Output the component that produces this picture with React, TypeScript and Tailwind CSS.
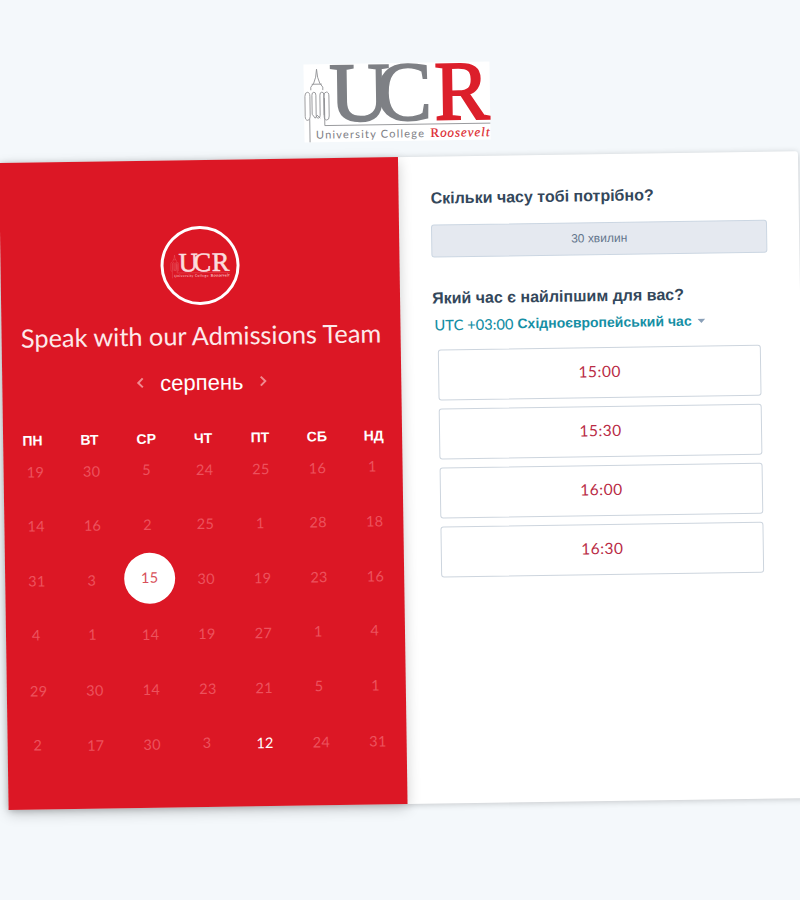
import React from "react";
import clsx from "clsx";

const weekdays = ["ПН", "ВТ", "СР", "ЧТ", "ПТ", "СБ", "НД"];

const weeks: number[][] = [
  [19, 30, 5, 24, 25, 16, 1],
  [14, 16, 2, 25, 1, 28, 18],
  [31, 3, 15, 30, 19, 23, 16],
  [4, 1, 14, 19, 27, 1, 4],
  [29, 30, 14, 23, 21, 5, 1],
  [2, 17, 30, 3, 12, 24, 31],
];

const slots = ["15:00", "15:30", "16:00", "16:30"];

type LogoProps = { className: string; main: string; accent: string; line: string };

function Logo({ className, main, accent, line }: LogoProps) {
  return (
    <svg viewBox="0 0 186 78" className={clsx("overflow-visible", className)}>
      <g fill="none" stroke={line} strokeWidth="0.900">
        <path d="M5.500 78V55M1 52V32q0-4 2.500-4t2.500 4v20q0 4-2.500 4T1 52ZM8 50V31q0-3 2-3t2 3v20q0 3 2 3t2-3V31q0-3 2-3t2 3v20M20 52V32q0-4 2.500-4t2.500 4v20q0 4-2.500 4T20 52ZM7 26v-3l3-4 2-6 1-8 1 8 2 6 3 4v3M8 20h10M8 50l3 4 2-3 3 3" />
        <path d="M20.500 34V61.500H186" />
      </g>
      <g fontFamily="'Liberation Serif', serif" fontSize="84">
        <text x="25.500" y="57" fill={main} stroke={main} strokeWidth="1.800">U</text>
        <text x="72" y="57" fill={main} stroke={main} strokeWidth="1.800">C</text>
        <text x="130.500" y="57" fill={accent} stroke={accent} strokeWidth="2" textLength="55" lengthAdjust="spacingAndGlyphs">R</text>
      </g>
      <text x="11.500" y="74.500" fill={main} fontFamily="Lato, sans-serif" fontSize="11" textLength="108">University College</text>
      <text x="126" y="74.500" fill={accent} fontFamily="'Liberation Serif', serif" fontSize="13" stroke={accent} strokeWidth=".2" textLength="59">
        R<tspan fontStyle="italic">oosevelt</tspan>
      </text>
    </svg>
  );
}

function Chevron({ d }: { d: string }) {
  return (
    <svg viewBox="0 0 8 12" className="h-3 w-2 fill-none stroke-[#f08a90] stroke-2">
      <path d={d} />
    </svg>
  );
}

function Day({ day, selected, active }: { day: number; selected: boolean; active: boolean }) {
  if (selected) {
    return (
      <div className="-mt-[2px] ml-[3px] flex size-[51px] items-center justify-center rounded-full bg-white pb-[2px] text-[#d8505a]">
        {day}
      </div>
    );
  }
  return (
    <div
      className={clsx(
        day > 9 ? "pl-[3px]" : "pb-px",
        active ? "text-white" : "text-[#ec525d]",
      )}
    >
      {day}
    </div>
  );
}

function Calendar() {
  return (
    <section className="flex w-[399px] shrink-0 flex-col bg-[#dc1725] pt-[66px] text-white shadow-[0_4px_14px_rgba(0,0,0,0.2)]">
      <div className="flex size-[79px] items-center justify-center self-center rounded-full border-[3px] border-white">
        <Logo className="h-[25px] w-[59px]" main="#fbdcde" accent="#fbdcde" line="#ee7d84" />
      </div>
      <h1 className="mt-[13px] h-[34px] text-center font-[Lato] text-[25.300px] leading-[34px] whitespace-nowrap text-[#fde9ea]">
        Speak with our Admissions Team
      </h1>
      <div className="mt-[14px] flex h-8 items-center justify-center gap-4">
        <Chevron d="M6.500 1.500L2 6L6.500 10.500" />
        <span className="text-[22px]">серпень</span>
        <Chevron d="M1.500 1.500L6 6L1.500 10.500" />
      </div>
      <div className="mt-[30px] ml-px grid h-5 w-[398px] grid-cols-7 text-center text-[14px] leading-5 font-bold">
        {weekdays.map((name) => (
          <span key={name}>{name}</span>
        ))}
      </div>
      <div className="-mt-[6px] ml-[2px] w-[395px] font-[Lato] text-[14.500px] tracking-[0.3px]">
        {weeks.map((week, row) => (
          <div key={row} className="grid h-[54.800px] grid-cols-7 place-items-center">
            {week.map((day, col) => (
              <Day key={col} day={day} selected={row === 2 && col === 2} active={row === 5 && col === 4} />
            ))}
          </div>
        ))}
      </div>
    </section>
  );
}

function TimePicker() {
  return (
    <section className="flex min-w-0 flex-1 flex-col px-8 pt-[31px] text-[#33475b]">
      <h2 className="text-[16px] leading-[22px] font-bold">Скільки часу тобі потрібно?</h2>
      <button className="mt-[15px] h-[33px] w-[336px] rounded-[3px] border border-[#cbd6e2] bg-[#e5e9f0] pb-[2px] text-[12px] text-[#63758c]">
        30 хвилин
      </button>
      <h2 className="mt-[30px] text-[16px] leading-[22px] font-bold">Який час є найліпшим для вас?</h2>
      <div className="mt-[5px] ml-[2px] flex h-5 items-center whitespace-nowrap text-[#168fa5]">
        <span className="w-[83px] font-[Lato] text-[14.700px] font-medium">UTC +03:00</span>
        <span className="text-[14px] font-bold">Східноєвропейський час</span>
        <svg viewBox="0 0 8 5" className="ml-[6px] h-[5px] w-2 fill-[#8aa0b8]">
          <path d="M0 0H8L4 4.500Z" />
        </svg>
      </div>
      <div className="mt-[15px] ml-[5px] flex w-[323px] flex-col gap-2">
        {slots.map((slot) => (
          <button
            key={slot}
            className="h-[51px] rounded-[3px] border border-[#cdd5de] bg-white pb-[2px] font-[Lato] text-[15.500px] tracking-[0.500px] text-[#b92b45]"
          >
            {slot}
          </button>
        ))}
      </div>
    </section>
  );
}

export default function App() {
  return (
    <main className="flex h-[900px] w-[800px] flex-col overflow-hidden bg-[#f4f8fb] font-['Liberation_Sans',Arial,sans-serif]">
      <header className="flex h-[163px] shrink-0 justify-center pt-[63px] pr-[6px]">
        <div className="h-[78px] w-[186px] -rotate-[0.85deg] bg-white">
          <Logo className="h-[78px] w-[186px]" main="#7e8085" accent="#dc1f2b" line="#8f9194" />
        </div>
      </header>
      <div className="-ml-px flex h-[647px] w-[799px] shrink-0 origin-top-left -rotate-[0.85deg] rounded-[3px] bg-white shadow-[0_1px_6px_rgba(0,0,0,0.2)]">
        <Calendar />
        <TimePicker />
      </div>
    </main>
  );
}
